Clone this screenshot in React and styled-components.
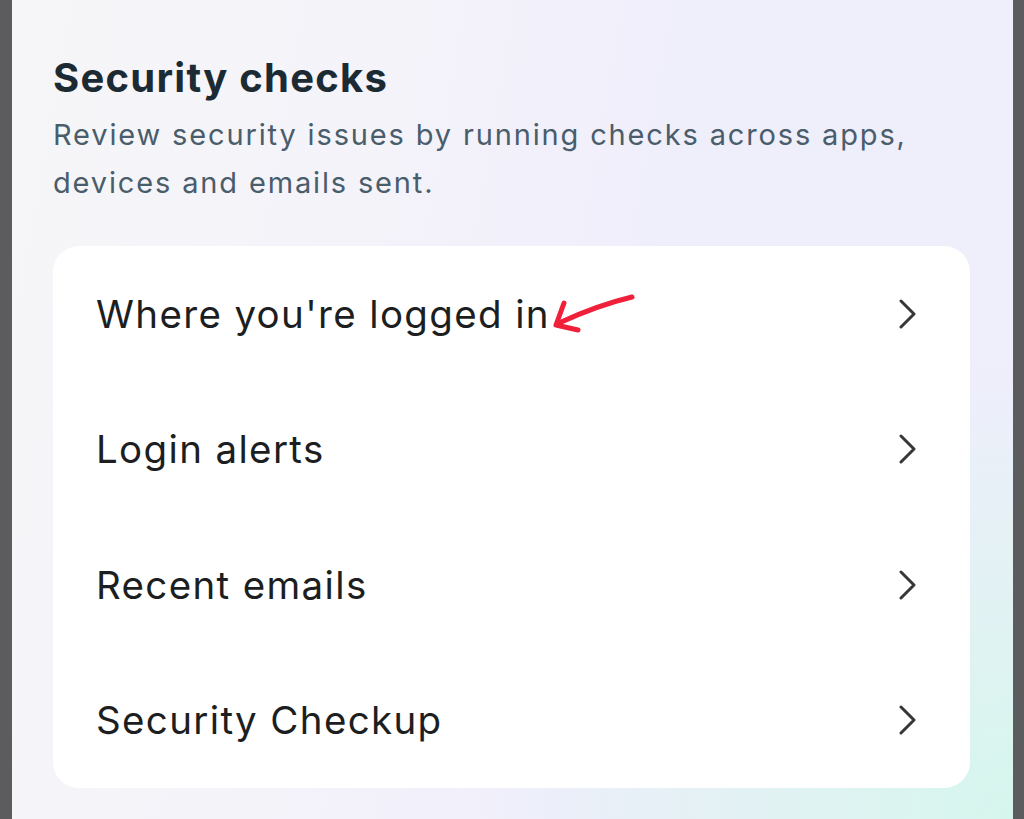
import React from "react";
import styled, { createGlobalStyle } from "styled-components";

const GlobalStyle = createGlobalStyle`
  html, body { margin: 0; padding: 0; }
  body { font-family: Inter, "Noto Sans", sans-serif; -webkit-font-smoothing: antialiased; }
`;

const Frame = styled.div`
  display: flex;
  width: 1024px;
  height: 819px;
  overflow: hidden;
`;

const Bezel = styled.div`
  width: ${(p) => p.$w}px;
  flex: none;
  background: #5c5c5e;
`;

const Screen = styled.main`
  flex: 1;
  display: flex;
  flex-direction: column;
  padding: 54px 43px 0 41px;
  background:
    radial-gradient(ellipse 520px 460px at 100% 100%, rgba(212, 246, 236, 0.95), rgba(212, 246, 236, 0) 100%),
    linear-gradient(100deg, #f6f6f8 0%, #f4f3fa 35%, #efeefb 60%, #efeefb 100%);
`;

const Title = styled.h1`
  margin: 0;
  font-size: 40px;
  line-height: 48px;
  font-weight: 700;
  color: #1c2b33;
  letter-spacing: 1.25px;
`;

const Subtitle = styled.p`
  margin: 9px 0 0;
  font-size: 29px;
  line-height: 48px;
  font-weight: 400;
  color: #4a5d6b;
  letter-spacing: 1.85px;
`;

const Card = styled.section`
  margin-top: 39px;
  background: #ffffff;
  border-radius: 26px;
  display: flex;
  flex-direction: column;
`;

const Row = styled.div`
  height: 135.5px;
  display: flex;
  align-items: center;
  justify-content: space-between;
  padding: 0 52px 0 43px;
  box-sizing: border-box;
`;

const Label = styled.span`
  display: inline-flex;
  align-items: center;
  font-size: 38.5px;
  font-weight: 400;
  color: #1c1e21;
  letter-spacing: 1.35px;
`;

const Annotation = styled.svg`
  width: 84px;
  height: 44px;
  margin: 2px 0 0 1px;
  overflow: visible;
`;

const Chevron = () => (
  <svg width="20" height="30" viewBox="0 0 20 30" fill="none">
    <path d="M3 2 L16 15 L3 28" stroke="#35373a" strokeWidth="3" strokeLinecap="round" strokeLinejoin="round" />
  </svg>
);

const RedArrow = () => (
  <Annotation viewBox="0 0 84 44">
    <path
      d="M81 4 C 60 9, 36 17, 8 30"
      stroke="#f0203b"
      strokeWidth="5"
      fill="none"
      strokeLinecap="round"
    />
    <path
      d="M13 10 L 5 32 L 27 37"
      stroke="#f0203b"
      strokeWidth="5"
      fill="none"
      strokeLinecap="round"
      strokeLinejoin="round"
    />
  </Annotation>
);

const items = [
  { label: "Where you're logged in", marked: true },
  { label: "Login alerts" },
  { label: "Recent emails" },
  { label: "Security Checkup" },
];

export default function App() {
  return (
    <>
      <GlobalStyle />
      <Frame>
        <Bezel $w={12} />
        <Screen>
          <Title>Security checks</Title>
          <Subtitle>
            Review security issues by running checks across apps,
            <br />
            devices and emails sent.
          </Subtitle>
          <Card>
            {items.map((it) => (
              <Row key={it.label}>
                <Label>
                  {it.label}
                  {it.marked && <RedArrow />}
                </Label>
                <Chevron />
              </Row>
            ))}
          </Card>
        </Screen>
        <Bezel $w={11} />
      </Frame>
    </>
  );
}
